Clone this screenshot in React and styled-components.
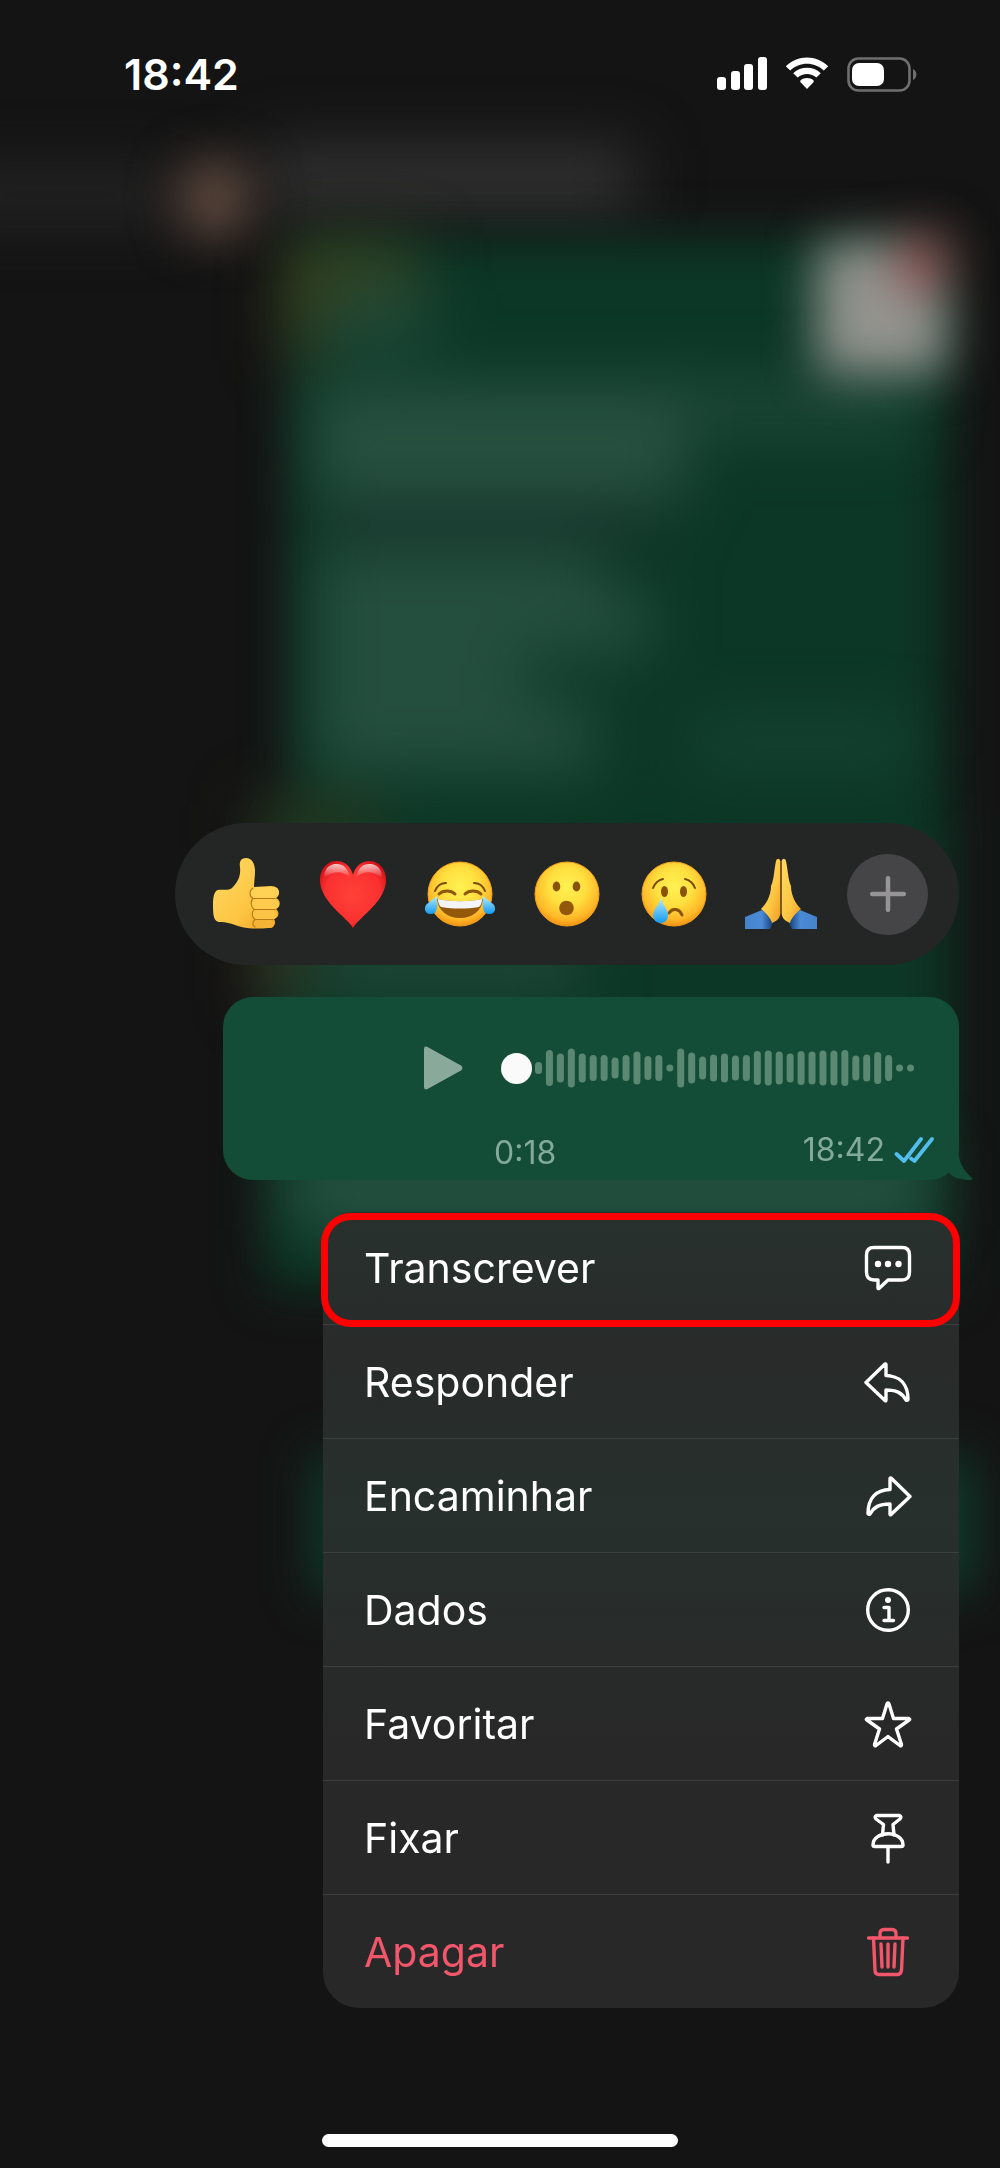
import React from "react";
import styled, { createGlobalStyle } from "styled-components";

const GlobalStyle = createGlobalStyle`
  *, *::before, *::after { box-sizing: border-box; }
  body {
    margin: 0;
    background: #141414;
    color: #ffffff;
    font-family: Inter, "Liberation Sans", sans-serif;
  }
  button, input { font: inherit; color: inherit; }
`;

const Screen = styled.div`
  position: relative;
  display: flex;
  flex-direction: column;
  min-height: 100vh;
  overflow: hidden;
`;

const Backdrop = styled.svg`
  position: absolute;
  inset: 0;
  width: 100%;
  height: 100%;
`;

const StatusBar = styled.header`
  position: relative;
  display: flex;
  align-items: center;
  justify-content: space-between;
  height: 64px;
  margin-top: 42px;
  padding: 0 83px 0 124px;
`;

const Clock = styled.time`
  font-size: 43px;
  line-height: 50px;
  font-weight: 600;
`;

const StatusIcons = styled.div`
  display: flex;
  align-items: center;
  gap: 18px;

  svg { display: block; }
`;

const Main = styled.main`
  position: relative;
  flex: 1;
  display: flex;
  flex-direction: column;
  justify-content: flex-end;
  align-items: flex-end;
  gap: 32px;
  padding: 0 41px 126px;
`;

const ReactionBar = styled.div`
  display: grid;
  grid-template-columns: repeat(7, 1fr);
  align-items: center;
  justify-items: center;
  width: 100%;
  max-width: 784px;
  height: 142px;
  padding: 0 18px 0 17px;
  border-radius: 71px;
  background: #242625;
`;

const Reaction = styled.button`
  display: block;
  padding: 0;
  border: 0;
  background: none;
  cursor: pointer;

  svg { display: block; }
`;

const MoreButton = styled(Reaction)`
  display: grid;
  place-items: center;
  width: 81px;
  height: 81px;
  border-radius: 50%;
  background: #454547;
`;

const Bubble = styled.article`
  position: relative;
  display: flex;
  flex-direction: column;
  justify-content: space-between;
  width: 100%;
  max-width: 736px;
  height: 183px;
  padding: 47px 25px 9px 200px;
  border-radius: 30px;
  background: #144d37;
`;

const Tail = styled.svg`
  position: absolute;
  right: -14px;
  bottom: 0;
`;

const Player = styled.div`
  display: flex;
  align-items: center;
  gap: 38px;
  height: 48px;
  padding-right: 19px;
`;

const PlayButton = styled(Reaction)`
  flex: none;
`;

const Timeline = styled.div`
  position: relative;
  flex: 1;
  display: flex;
  justify-content: flex-end;
`;

const Seek = styled.input`
  position: absolute;
  inset: 0;
  width: 100%;
  height: 100%;
  margin: 0;
  appearance: none;
  background: transparent;
  cursor: pointer;

  &::-webkit-slider-thumb {
    appearance: none;
    width: 31px;
    height: 31px;
    border-radius: 50%;
    background: #fafafa;
  }
`;

const Meta = styled.div`
  display: flex;
  justify-content: space-between;
  align-items: flex-start;
  padding-left: 71px;
  color: #84ab99;
  font-size: 32px;
  line-height: 36px;
`;

const Duration = styled.span`
  padding-top: 3px;
`;

const Sent = styled.span`
  display: flex;
  align-items: center;
  gap: 9px;
`;

const Menu = styled.div`
  display: flex;
  flex-direction: column;
  width: 100%;
  max-width: 636px;
  border-radius: 30px 30px 36px 36px;
  background: linear-gradient(#28312e, #282b2a 18%, #27302d 38%, #282b2a 56%, #282828 66%, #282828);
`;

const MenuItem = styled.button`
  position: relative;
  display: flex;
  align-items: center;
  justify-content: space-between;
  height: 114px;
  padding: 0 48px 0 41px;
  border: 0;
  border-bottom: 1px solid #3c3f3e;
  background: none;
  color: ${(p) => (p.$danger ? "#f2566b" : "#ffffff")};
  font-size: 41px;
  line-height: 50px;
  text-align: left;
  cursor: pointer;

  &:first-child, &:last-child { height: 113px; }
  &:last-child { border-bottom: 0; }

  ${(p) =>
    p.$highlighted &&
    `&::after {
      content: "";
      position: absolute;
      inset: 1px -1px -3px -2px;
      border: 7px solid #ff0000;
      border-radius: 30px;
    }`}
`;

const HomeBar = styled.div`
  position: relative;
  align-self: center;
  width: 356px;
  height: 13px;
  margin-bottom: 21px;
  border-radius: 7px;
  background: #ffffff;
`;

/* Out-of-focus conversation behind the context menu */
function ChatBackdrop() {
  return (
    <Backdrop viewBox="0 0 1000 2168" preserveAspectRatio="xMidYMin slice" aria-hidden="true">
      <defs>
        <filter id="soft" filterUnits="userSpaceOnUse" x="-100" y="0" width="1200" height="2168" colorInterpolationFilters="sRGB">
          <feGaussianBlur stdDeviation="24" />
        </filter>
        <filter id="softer" filterUnits="userSpaceOnUse" x="-100" y="0" width="1200" height="2168" colorInterpolationFilters="sRGB">
          <feGaussianBlur stdDeviation="30" />
        </filter>
      </defs>
      <rect width="1000" height="2168" fill="#141414" />
      <g filter="url(#softer)">
        <rect x="-60" y="170" width="240" height="50" fill="#252525" />
        <rect x="260" y="147" width="375" height="66" fill="#323232" />
      </g>
      <g filter="url(#soft)">
        <rect x="178" y="158" width="74" height="82" rx="34" fill="#5c473d" />
      </g>
      <g filter="url(#soft)">
        <rect x="292" y="238" width="654" height="600" fill="#0c3726" />
        <rect x="266" y="812" width="684" height="476" fill="#0c3726" />
        <rect x="314" y="1456" width="660" height="138" fill="#0e3c2c" />
      </g>
      <g filter="url(#softer)">
        <rect x="300" y="240" width="120" height="50" fill="#3c4420" opacity="0.8" />
        <rect x="284" y="250" width="36" height="110" fill="#463d18" opacity="0.8" />
        <rect x="325" y="290" width="105" height="60" fill="#204a38" />
        <rect x="310" y="380" width="610" height="54" fill="#1d4737" />
        <rect x="315" y="394" width="370" height="106" fill="#275040" />
        <rect x="315" y="500" width="345" height="48" fill="#14352a" />
        <rect x="315" y="548" width="285" height="60" fill="#244e3e" />
        <rect x="315" y="590" width="335" height="66" fill="#244e3e" />
        <rect x="315" y="640" width="210" height="90" fill="#244e3e" />
        <rect x="315" y="700" width="280" height="72" fill="#244e3e" />
        <rect x="690" y="720" width="220" height="44" fill="#174434" />
        <rect x="250" y="800" width="130" height="50" fill="#33341a" opacity="0.7" />
        <rect x="256" y="930" width="44" height="70" fill="#46321e" opacity="0.9" />
        <rect x="320" y="930" width="260" height="70" fill="#1e4636" />
        <rect x="290" y="1150" width="640" height="78" fill="#265342" />
      </g>
      <g filter="url(#soft)">
        <rect x="817" y="242" width="130" height="132" rx="10" fill="#93948f" />
        <rect x="896" y="232" width="54" height="60" fill="#8c484b" opacity="0.9" />
      </g>
    </Backdrop>
  );
}

function FaceBase() {
  return <circle cx="36" cy="36" r="32" fill="url(#face)" stroke="#f2a01c" strokeWidth="1" />;
}

const HiddenDefs = styled.svg`
  position: absolute;
  width: 0;
  height: 0;
`;

function EmojiDefs() {
  return (
    <HiddenDefs aria-hidden="true">
      <defs>
        <radialGradient id="face" cx="0.5" cy="0.38" r="0.64">
          <stop offset="0" stopColor="#fff152" />
          <stop offset="0.45" stopColor="#ffe040" />
          <stop offset="0.8" stopColor="#ffb828" />
          <stop offset="1" stopColor="#f08c10" />
        </radialGradient>
        <linearGradient id="tear" x1="0" y1="0" x2="0" y2="1">
          <stop offset="0" stopColor="#b5ecff" />
          <stop offset="1" stopColor="#149bee" />
        </linearGradient>
        <radialGradient id="heart" cx="0.5" cy="0.5" r="0.6">
          <stop offset="0" stopColor="#ff4238" />
          <stop offset="0.7" stopColor="#fb3030" />
          <stop offset="1" stopColor="#cf0f16" />
        </radialGradient>
        <linearGradient id="shine" x1="0" y1="0" x2="0" y2="1">
          <stop offset="0" stopColor="#ffffff" stopOpacity="0.75" />
          <stop offset="1" stopColor="#ffffff" stopOpacity="0" />
        </linearGradient>
        <linearGradient id="skin" x1="0" y1="0" x2="1" y2="1">
          <stop offset="0" stopColor="#ffda66" />
          <stop offset="0.6" stopColor="#fdc642" />
          <stop offset="1" stopColor="#ee9d22" />
        </linearGradient>
        <linearGradient id="sleeveL" x1="0" y1="0" x2="1" y2="0">
          <stop offset="0" stopColor="#4583cc" />
          <stop offset="0.6" stopColor="#4a8ad6" />
          <stop offset="1" stopColor="#173d72" />
        </linearGradient>
        <linearGradient id="sleeveR" x1="1" y1="0" x2="0" y2="0">
          <stop offset="0" stopColor="#4583cc" />
          <stop offset="0.6" stopColor="#4a8ad6" />
          <stop offset="1" stopColor="#173d72" />
        </linearGradient>
      </defs>
    </HiddenDefs>
  );
}

const reactions = [
  {
    name: "Curtir",
    art: (
      <>
        <path
          d="M8 32C13 31 18 33 22 30C28 24 31 18 30 9C29 4 31 0 36 0C42 0 45 6 45 13C45 19 44 24 44 29L61 28C70 28 71 37 66 40C71 42 71 49 66 51C70 54 69 60 64 61C67 65 64 70 58 70C49 71 37 71 28 68C22 66 17 64 9 64C4 63 3 58 3 48C3 39 4 33 8 32Z"
          fill="url(#skin)"
        />
        <rect x="41" y="29" width="28" height="11" rx="5.500" fill="#ffd256" />
        <rect x="42" y="41" width="27" height="10" rx="5" fill="#fecb4c" />
        <rect x="43" y="52" width="24" height="9" rx="4.500" fill="#fcc444" />
        <rect x="44" y="62" width="20" height="8" rx="4" fill="#f5b336" />
        <path d="M43 30C39 33 39 38 43 40.500C40 43 41 49 44 51.500C41 55 42 59 45 61.500C42 64 42 67 45 69M43 40.500H65M44 51.500H65M45 61.500H63" fill="none" stroke="#b87a18" strokeWidth="1.100" strokeLinecap="round" />
      </>
    ),
  },
  {
    name: "Amei",
    art: (
      <>
        <path d="M36 70C31 60 3 44 3 22C3 10 11 3 20 3C28 3 34 9 36 17C38 9 44 3 52 3C61 3 69 10 69 22C69 44 41 60 36 70Z" fill="url(#heart)" />
        <path d="M7 20C7 10 13 6 20 6C27 6 31 11 33 19C24 12 15 13 7 20Z" fill="url(#shine)" />
        <path d="M65 20C65 10 59 6 52 6C45 6 41 11 39 19C48 12 57 13 65 20Z" fill="url(#shine)" />
      </>
    ),
  },
  {
    name: "Haha",
    art: (
      <>
        <FaceBase />
        <path d="M11 33C13 28 17 25 22 25M61 33C59 28 55 25 50 25" fill="none" stroke="#7a4a05" strokeWidth="2" strokeLinecap="round" />
        <path d="M15 36C19 32 27 32 31 36M41 36C45 32 53 32 57 36" fill="none" stroke="#8f5707" strokeWidth="3" strokeLinecap="round" />
        <path d="M13 41C28 44 44 44 59 41C58 53 48 60 36 60C24 60 14 53 13 41Z" fill="#93580a" />
        <path d="M14 41C28 44 44 44 58 41C58 45 57 47 55 49C42 51 30 51 17 49C15 47 14 45 14 41Z" fill="#f4f4f7" />
        <path d="M13 38C13 45 15 56 7 56C1 56 -1 50 3 46C6 43 10 41 13 38Z" fill="url(#tear)" />
        <path d="M59 38C59 45 57 56 65 56C71 56 73 50 69 46C66 43 62 41 59 38Z" fill="url(#tear)" />
      </>
    ),
  },
  {
    name: "Uau",
    art: (
      <>
        <FaceBase />
        <ellipse cx="25.500" cy="28.500" rx="3.800" ry="5" fill="#88530a" />
        <ellipse cx="45.500" cy="28.500" rx="3.800" ry="5" fill="#88530a" />
        <circle cx="35.500" cy="50" r="7.300" fill="#93580a" />
      </>
    ),
  },
  {
    name: "Triste",
    art: (
      <>
        <FaceBase />
        <path d="M15 30C17 25 20 22 25 21M57 30C55 25 52 22 47 21" fill="none" stroke="#7a4a05" strokeWidth="2" strokeLinecap="round" />
        <ellipse cx="26.500" cy="33.500" rx="3.500" ry="5.500" fill="#88530a" />
        <ellipse cx="45.500" cy="33.500" rx="3.500" ry="5.500" fill="#88530a" />
        <path d="M31 55C34 50 41 50 44 57" fill="none" stroke="#88530a" strokeWidth="3" strokeLinecap="round" />
        <path d="M23 40C25 47 30 52 30 57C30 62 27 65 23 65C19 65 15 62 15 57C15 52 21 47 23 40Z" fill="url(#tear)" />
      </>
    ),
  },
  {
    name: "Agradecer",
    art: (
      <>
        <path d="M0 59L17 52C22 55 27 60 28 65L25 71H0Z" fill="url(#sleeveL)" />
        <path d="M72 59L55 52C50 55 45 60 44 65L47 71H72Z" fill="url(#sleeveR)" />
        <path d="M35.500 4C35 0 32 0 31 3C29 12 29 22 26 28C26 38 21 46 16 51C20 54 26 60 27 65C34 62 35 59 35.500 54Z" fill="url(#skin)" />
        <path d="M36.500 4C37 0 40 0 41 3C43 12 43 22 46 28C46 38 51 46 56 51C52 54 46 60 45 65C38 62 37 59 36.500 54Z" fill="url(#skin)" />
        <path d="M36 4V57" stroke="#7c4a08" strokeWidth="1.300" />
      </>
    ),
  },
];

const waveform = [
  12, 36, 29, 39, 29, 26, 26, 21, 26, 33, 24, 26, 7, 39, 31, 23, 27, 29,
  25, 26, 34, 35, 33, 29, 34, 33, 35, 35, 36, 25, 27, 32, 26, 7, 7,
];

const menuItems = [
  {
    label: "Transcrever",
    highlighted: true,
    icon: (
      <>
        <path d="M9 2.500H37Q44.500 2.500 44.500 10V27Q44.500 35 37 35H23L14 43.500Q13 44 13 43V35H9Q1.500 35 1.500 27V10Q1.500 2.500 9 2.500Z" />
        <g fill="currentColor" stroke="none">
          <circle cx="13" cy="19" r="3.200" />
          <circle cx="23" cy="19" r="3.200" />
          <circle cx="33.500" cy="19" r="3.200" />
        </g>
      </>
    ),
  },
  {
    label: "Responder",
    icon: <path d="M1 23.500L20 5Q21 4.500 21 6V16.500C35 17 43 25 43 40.500Q42 42 41 41C37 34 32 31 21 31V41Q21 42.500 20 41.500Z" />,
  },
  {
    label: "Encaminhar",
    icon: <path d="M45 23.500L26 5Q25 4.500 25 6V16.500C11 17 3 25 3 40.500Q4 42 5 41C9 34 14 31 25 31V41Q25 42.500 26 41.500Z" />,
  },
  {
    label: "Dados",
    icon: (
      <>
        <circle cx="23" cy="23" r="20.300" />
        <circle cx="23" cy="13" r="3" fill="currentColor" stroke="none" />
        <path d="M19 20.500H24V33M19 33.500H28.500" />
      </>
    ),
  },
  {
    label: "Favoritar",
    icon: <path d="M23 2Q22.300 2 22 3L17.500 17.500H2Q.500 18 2 19L14.500 28L9.500 43.500Q9.500 45.500 11 44.500L23 35.500L35 44.500Q36.500 45.500 36.500 43.500L31.500 28L44 19Q45.500 18 44 17.500H28.500L24 3Q23.700 2 23 2Z" />,
  },
  {
    label: "Fixar",
    icon: (
      <>
        <path d="M17.500 20L18.500 9.500L11 4Q9 1.500 11.500 .500H34.500Q37 1.500 35 4L28 9.500L29 20" />
        <path d="M8 30C8 15 38 15 38 30Q38 31.500 36 31.500H10Q8 31.500 8 30Z" />
        <path d="M23 32V47" />
      </>
    ),
  },
  {
    label: "Apagar",
    danger: true,
    icon: (
      <>
        <path d="M3.500 9H42.500M15 9V5Q15 .500 19 .500H27Q31 .500 31 5V9" />
        <path d="M8.500 9L10 41Q10 45.500 14 45.500H32Q36 45.500 36.500 41L38 9" />
        <path d="M16 15L17 38M23 15V38M30 15L29 38" />
      </>
    ),
  },
];

export default function App() {
  return (
    <Screen>
      <GlobalStyle />
      <ChatBackdrop />
      <EmojiDefs />
      <StatusBar>
        <Clock>18:42</Clock>
        <StatusIcons>
          <svg width="50" height="34" viewBox="0 0 50 34" fill="#fff" aria-label="Sinal">
            <rect x="0" y="20" width="9" height="13" rx="3" />
            <rect x="14" y="14" width="9" height="19" rx="3" />
            <rect x="27" y="7" width="9" height="26" rx="3" />
            <rect x="41" y="0" width="9" height="33" rx="3" />
          </svg>
          <svg width="44" height="34" viewBox="0 0 44 34" fill="#fff" aria-label="Wi-Fi">
            <path d="M.800 9.200C12.500-2.400 31.500-2.400 43.200 9.200L38.800 13.600C29.500 4.500 14.500 4.500 5.200 13.600Z" />
            <path d="M8.200 16.200C15.800 9 28.200 9 35.800 16.200L31.400 20.600C26 15.800 18 15.800 12.600 20.600Z" />
            <path d="M15.400 23.500C19.200 20.300 24.800 20.300 28.600 23.500Q29 24.500 28.400 25.200L22 32L15.600 25.200Q15 24.500 15.400 23.500Z" />
          </svg>
          <svg width="70" height="35" viewBox="0 0 70 35" aria-label="Bateria">
            <rect x="1.500" y="1.500" width="61" height="32" rx="10" fill="none" stroke="#6f6f6f" strokeWidth="2.600" />
            <rect x="5" y="6" width="32" height="23" rx="7" fill="#fff" />
            <path d="M66 12C70.500 14 70.500 21 66 23Z" fill="#6f6f6f" />
          </svg>
        </StatusIcons>
      </StatusBar>

      <Main>
        <ReactionBar>
          {reactions.map((r) => (
            <Reaction key={r.name} type="button" aria-label={r.name}>
              <svg width="72" height="72" viewBox="0 0 72 72">{r.art}</svg>
            </Reaction>
          ))}
          <MoreButton type="button" aria-label="Mais reações">
            <svg width="36" height="36" viewBox="0 0 36 36" stroke="#969496" strokeWidth="4.500" strokeLinecap="round">
              <path d="M18 2.200V33.800M2.200 18H33.800" />
            </svg>
          </MoreButton>
        </ReactionBar>

        <Bubble>
          <Tail width="40" height="32" viewBox="0 0 40 32" aria-hidden="true">
            <path d="M24 0H25C25 13 30 22 39 30Q40 32 38 32C28 32 20 30 15 24Z" fill="#144d37" />
          </Tail>
          <Player>
            <PlayButton type="button" aria-label="Reproduzir">
              <svg width="40" height="44" viewBox="0 0 40 44" fill="#89a99b">
                <path d="M1 3Q1 -.500 4.500 1L38 19.500Q41 22 38 24.500L4.500 43Q1 44.500 1 41Z" />
              </svg>
            </PlayButton>
            <Timeline>
              <svg width="380" height="40" viewBox="0 0 380 40" fill="#5b8873" aria-hidden="true">
                {waveform.map((h, i) => (
                  <rect key={i} x={(i * 372) / 34} y={20 - h / 2} width="7" height={h} rx="3.500" />
                ))}
              </svg>
              <Seek type="range" min="0" max="18" defaultValue="0" aria-label="Posição do áudio" />
            </Timeline>
          </Player>
          <Meta>
            <Duration>0:18</Duration>
            <Sent>
              18:42
              <svg width="40" height="28" viewBox="0 0 40 28" fill="none" stroke="#53bdeb" strokeWidth="3.800" strokeLinecap="round" strokeLinejoin="round" aria-label="Lida">
                <path d="M2.500 18L10 25L27 3M17 22.500L20.500 25L38 3" />
              </svg>
            </Sent>
          </Meta>
        </Bubble>

        <Menu role="menu">
          {menuItems.map((item) => (
            <MenuItem key={item.label} type="button" role="menuitem" $highlighted={item.highlighted} $danger={item.danger}>
              {item.label}
              <svg
                width="46"
                height="46"
                viewBox="0 0 46 46"
                overflow="visible"
                fill="none"
                stroke="currentColor"
                strokeWidth="3.400"
                strokeLinecap="round"
                strokeLinejoin="round"
                aria-hidden="true"
              >
                {item.icon}
              </svg>
            </MenuItem>
          ))}
        </Menu>
      </Main>
      <HomeBar />
    </Screen>
  );
}
